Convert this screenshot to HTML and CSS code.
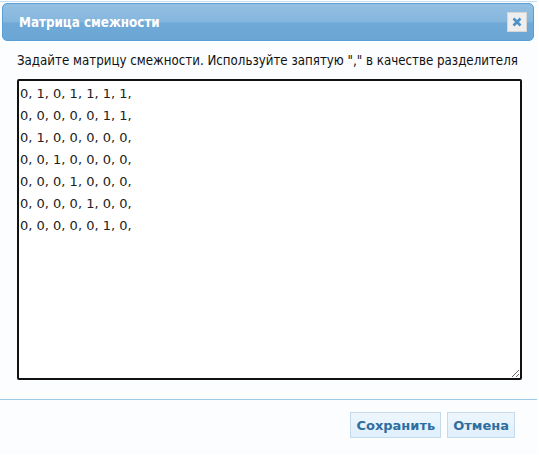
FILE: index.html
```html
<!DOCTYPE html>
<html lang="ru">
<head>
<meta charset="utf-8">
<title>Матрица смежности</title>
<link rel="stylesheet" href="styles.css">
</head>
<body>
<div class="dialog">
  <div class="titlebar">
    <span class="title">Матрица смежности</span>
    <button class="close" aria-label="close">
      <svg width="10" height="10" viewBox="0 0 10 10"><path d="M1.5 1.5 L8.5 8.5 M8.5 1.5 L1.5 8.5" stroke="#4a90c8" stroke-width="2.6" stroke-linecap="butt"/></svg>
    </button>
  </div>
  <div class="content">
    <p class="hint">Задайте матрицу смежности. Используйте запятую "," в качестве разделителя</p>
    <textarea class="matrix">0, 1, 0, 1, 1, 1, 1,
0, 0, 0, 0, 0, 1, 1,
0, 1, 0, 0, 0, 0, 0,
0, 0, 1, 0, 0, 0, 0,
0, 0, 0, 1, 0, 0, 0,
0, 0, 0, 0, 1, 0, 0,
0, 0, 0, 0, 0, 1, 0,
</textarea>
  </div>
  <div class="buttons">
    <button class="btn">Сохранить</button>
    <button class="btn">Отмена</button>
  </div>
</div>
</body>
</html>
```
FILE: styles.css
```css
html, body {
  margin: 0;
  padding: 0;
  background: #ffffff;
}
body {
  font-family: "DejaVu Sans Condensed", "DejaVu Sans", sans-serif;
  width: 539px;
  height: 455px;
  overflow: hidden;
}
.dialog {
  width: 537px;
  height: 452px;
  margin-top: 1px;
  border-top: 1px solid #c5ddf0;
  background: #fbfdfe;
  display: flex;
  flex-direction: column;
}
.titlebar {
  margin: 1px 3px 0 2px;
  height: 36px;
  border: 1px solid #5a9ed6;
  border-radius: 5px;
  background: linear-gradient(to bottom, #93c0e2 0%, #85b6dd 50%, #70a9d7 52%, #6aa6d6 100%);
  display: flex;
  align-items: center;
  justify-content: space-between;
  padding: 0 6px 0 16px;
}
.title {
  color: #ffffff;
  font-weight: bold;
  font-size: 13.3px;
}
.close {
  width: 20px;
  height: 20px;
  padding: 0;
  border: 1px solid #d6d6d6;
  background: #eeeeee;
  display: flex;
  align-items: center;
  justify-content: center;
}
.content {
  padding: 0 16px 0 17px;
}
.hint {
  margin: 12px 0 11px 0;
  font-size: 13.2px;
  color: #111;
  white-space: nowrap;
}
.matrix {
  display: block;
  box-sizing: border-box;
  width: 505px;
  height: 301px;
  margin: 0;
  border: 2px solid #111;
  border-radius: 2px;
  background: #fff;
  font-family: "DejaVu Sans", sans-serif;
  font-size: 13px;
  line-height: 22px;
  padding: 2px 0 0 1px;
  resize: both;
  color: #222;
}
.buttons {
  margin-top: 19px;
  border-top: 1px solid #9ccbe8;
  display: flex;
  justify-content: flex-end;
  gap: 6px;
  padding: 12px 22px 0 0;
}
.btn {
  height: 26px;
  padding: 0 5px;
  border: 1px solid #c5dbec;
  background: linear-gradient(to bottom, #eef6fc, #dfeffc);
  color: #2e6e9e;
  font-family: "DejaVu Sans", sans-serif;
  font-weight: bold;
  font-size: 13px;
}
```
